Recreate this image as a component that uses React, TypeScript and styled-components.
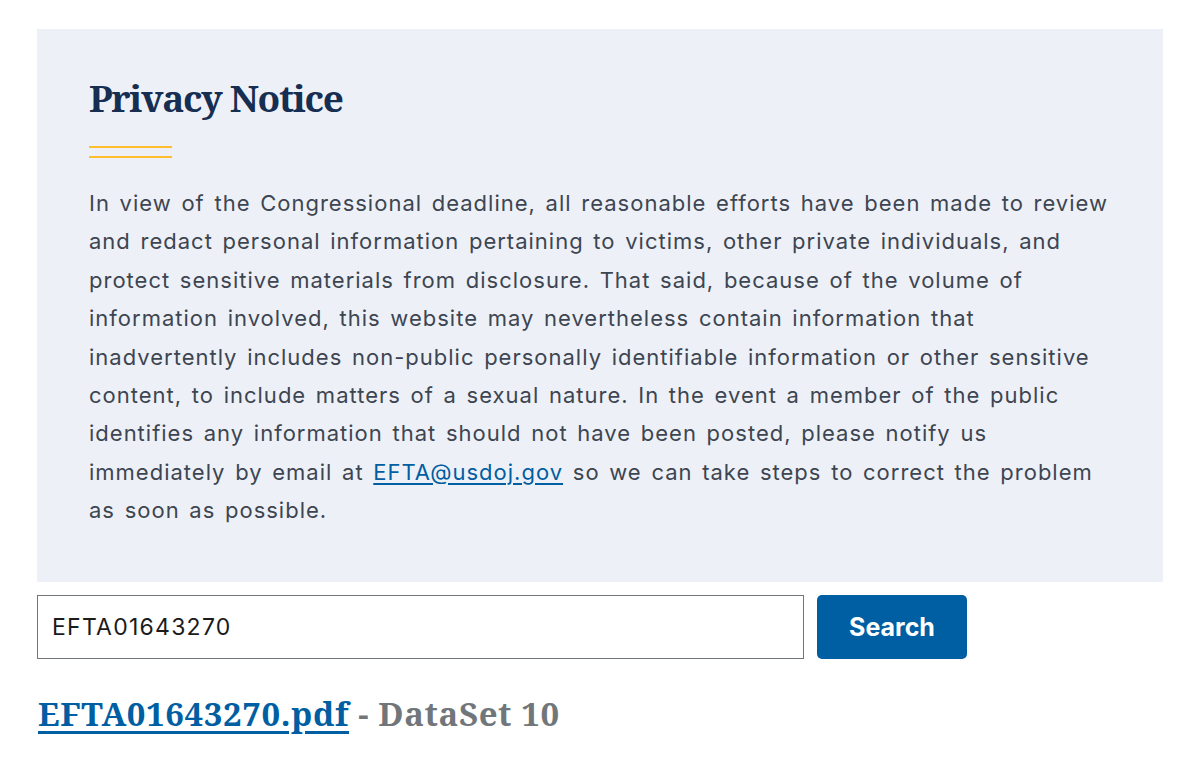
import React from "react";
import styled, { createGlobalStyle } from "styled-components";

const GlobalStyle = createGlobalStyle`
  html, body {
    margin: 0;
    padding: 0;
    background: #ffffff;
  }
  body {
    font-family: "Inter", "Noto Sans", "Liberation Sans", sans-serif;
    color: #1b1b1b;
  }
`;

const Page = styled.main`
  padding: 29px 37px 40px 37px;
  display: flex;
  flex-direction: column;
`;

const NoticePanel = styled.section`
  background: #edf1f7;
  padding: 47px 52px 52px 52px;
`;

const Title = styled.h2`
  margin: 0;
  font-family: "Noto Serif", "DejaVu Serif", serif;
  font-weight: 700;
  font-size: 37px;
  line-height: 44px;
  color: #162e51;
  letter-spacing: -1.3px;
`;

const GoldRule = styled.div`
  width: 83px;
  height: 12px;
  margin-top: 26px;
  border-top: 2px solid #ffbe2e;
  border-bottom: 2px solid #ffbe2e;
  box-sizing: border-box;
`;

const Body = styled.p`
  margin: 26px 0 0 0;
  font-size: 22px;
  line-height: 38.4px;
  letter-spacing: 1px;
  word-spacing: 2.5px;
  color: #3d4551;
  max-width: 1022px;
`;

const MailLink = styled.a`
  color: #005ea2;
  text-decoration: underline;
  text-decoration-thickness: 1.5px;
  text-underline-offset: 3px;
`;

const SearchRow = styled.form`
  display: flex;
  gap: 13px;
  margin-top: 13px;
`;

const SearchInput = styled.input`
  width: 767px;
  height: 64px;
  box-sizing: border-box;
  border: 1px solid #71767a;
  border-radius: 0;
  padding: 0 14px;
  font-family: "Inter", "Noto Sans", sans-serif;
  font-size: 23px;
  letter-spacing: 1.25px;
  color: #1b1b1b;
  outline: none;
`;

const SearchButton = styled.button`
  width: 150px;
  height: 64px;
  border: none;
  border-radius: 5px;
  background: #005ea2;
  color: #ffffff;
  font-family: "Inter", "Noto Sans", sans-serif;
  font-weight: 700;
  font-size: 25px;
  cursor: pointer;
`;

const Result = styled.h3`
  margin: 35px 0 0 1px;
  font-family: "Noto Serif", "DejaVu Serif", serif;
  font-weight: 700;
  font-size: 33px;
  line-height: 40px;
  letter-spacing: 0.6px;
  color: #71767a;
`;

const FileLink = styled.a`
  color: #005ea2;
  text-decoration: underline;
  text-decoration-thickness: 2.5px;
  text-underline-offset: 5px;
`;

export default function App() {
  return (
    <>
      <GlobalStyle />
      <Page>
        <NoticePanel>
          <Title>Privacy Notice</Title>
          <GoldRule />
          <Body>
            In view of the Congressional deadline, all reasonable efforts have been made to review
            and redact personal information pertaining to victims, other private individuals, and
            protect sensitive materials from disclosure. That said, because of the volume of
            information involved, this website may nevertheless contain information that
            inadvertently includes non-public personally identifiable information or other sensitive
            content, to include matters of a sexual nature. In the event a member of the public
            identifies any information that should not have been posted, please notify us
            immediately by email at <MailLink href="mailto:EFTA@usdoj.gov">EFTA@usdoj.gov</MailLink> so we can take steps to correct the problem
            as soon as possible.
          </Body>
        </NoticePanel>
        <SearchRow onSubmit={(e) => e.preventDefault()}>
          <SearchInput defaultValue="EFTA01643270" aria-label="Search" />
          <SearchButton type="submit">Search</SearchButton>
        </SearchRow>
        <Result>
          <FileLink href="#">EFTA01643270.pdf</FileLink> - DataSet 10
        </Result>
      </Page>
    </>
  );
}
